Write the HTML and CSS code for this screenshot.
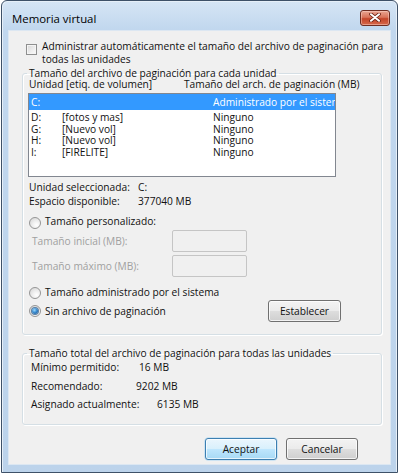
FILE: index.html
```html
<!DOCTYPE html>
<html lang="es">
<head>
<meta charset="utf-8">
<title>Memoria virtual</title>
<link rel="stylesheet" href="styles.css">
</head>
<body>
<div class="window">
  <div class="titlebar">
    <span class="title">Memoria virtual</span>
    <span class="close">
      <svg width="12" height="9" viewBox="0 0 12 9"><path d="M2 1.2 L10 7.8 M10 1.2 L2 7.8" stroke="#6b2113" stroke-width="3.6" stroke-linecap="round"/><path d="M2 1.2 L10 7.8 M10 1.2 L2 7.8" stroke="#ffffff" stroke-width="2" stroke-linecap="round"/></svg>
    </span>
  </div>
  <div class="client">
    <div class="chk-row">
      <span class="checkbox"></span>
      <span class="chk-text">Administrar automáticamente el tamaño del archivo de paginación para<br>todas las unidades</span>
    </div>

    <fieldset class="group g1">
      <legend>Tamaño del archivo de paginación para cada unidad</legend>
      <div class="cols"><span class="c-unit">Unidad [etiq. de volumen]</span><span>Tamaño del arch. de paginación (MB)</span></div>
      <div class="listbox">
        <div class="row sel"><span class="d">C:</span><span class="l"></span><span class="s">Administrado por el sistema</span></div>
        <div class="row first"><span class="d">D:</span><span class="l">[fotos y mas]</span><span class="s">Ninguno</span></div>
        <div class="row"><span class="d">G:</span><span class="l">[Nuevo vol]</span><span class="s">Ninguno</span></div>
        <div class="row"><span class="d">H:</span><span class="l">[Nuevo vol]</span><span class="s">Ninguno</span></div>
        <div class="row"><span class="d">I:</span><span class="l">[FIRELITE]</span><span class="s">Ninguno</span></div>
      </div>
      <div class="info">
        <div class="info-row"><span class="k">Unidad seleccionada:</span><span>C:</span></div>
        <div class="info-row"><span class="k">Espacio disponible:</span><span>377040 MB</span></div>
      </div>
      <div class="radio-row r1"><span class="radio"></span><span>Tamaño personalizado:</span></div>
      <div class="size-row s1"><span class="lbl">Tamaño inicial (MB):</span><span class="tbox"></span></div>
      <div class="size-row s2"><span class="lbl">Tamaño máximo (MB):</span><span class="tbox"></span></div>
      <div class="radio-row r2"><span class="radio"></span><span>Tamaño administrado por el sistema</span></div>
      <div class="radio-row r3"><span class="radio checked"></span><span>Sin archivo de paginación</span><span class="btn set">Establecer</span></div>
    </fieldset>

    <fieldset class="group g2">
      <legend>Tamaño total del archivo de paginación para todas las unidades</legend>
      <div class="tot-row"><span class="k k1">Mínimo permitido:</span><span>16 MB</span></div>
      <div class="tot-row"><span class="k k2">Recomendado:</span><span>9202 MB</span></div>
      <div class="tot-row"><span class="k k3">Asignado actualmente:</span><span>6135 MB</span></div>
    </fieldset>

    <div class="actions">
      <span class="btn default">Aceptar</span>
      <span class="btn">Cancelar</span>
    </div>
  </div>
</div>
</body>
</html>
```

FILE: styles.css
```css
html, body {
  margin: 0;
  background: #ffffff;
}
body {
  font-family: "Open Sans", "Noto Sans", sans-serif;
  font-size: 10.2px;
  color: #111;
}
.window {
  margin-left: 1px;
  width: 397px;
  height: 473px;
  box-sizing: border-box;
  border: 1px solid #3e5168;
  border-radius: 6px 6px 0 0;
  background: linear-gradient(180deg, #d6e5f5 0, #c1d7ee 28px, #bcd3eb 100%);
  padding: 0 6px 7px;
  display: flex;
  flex-direction: column;
  box-shadow: inset 1px 1px 0 #e6eff8, inset -1px 0 0 #e6eff8;
}
.titlebar {
  height: 29px;
  box-sizing: border-box;
  padding-top: 4px;
  display: flex;
  align-items: center;
  flex: none;
}
.title {
  flex: 1;
  margin-left: 4px;
  margin-top: 2px;
  font-size: 11.4px;
  line-height: 15px;
  color: #000;
}
.close {
  width: 30px;
  height: 16px;
  margin-right: 1px;
  box-sizing: border-box;
  border: 1px solid #6e2d22;
  border-radius: 3px;
  background: linear-gradient(180deg, #e9a592 0%, #d9735a 45%, #c4452a 55%, #d5684b 100%);
  box-shadow: inset 0 0 0 1px rgba(255, 220, 210, 0.45);
  display: flex;
  align-items: center;
  justify-content: center;
}
.client {
  height: 435px;
  box-sizing: border-box;
  border: 1px solid #dce7f2;
  background: #f0f0f0;
  padding-top: 8.6px;
  flex: none;
}
.chk-row {
  display: flex;
  align-items: flex-start;
  margin-left: 17px;
  line-height: 13px;
}
.checkbox {
  width: 11px;
  height: 11px;
  box-sizing: border-box;
  margin-top: 4.4px;
  margin-right: 5px;
  border: 1px solid #8e8f8f;
  background: linear-gradient(135deg, #d6d6d6 0%, #eeeeee 60%, #fbfbfb 100%);
  box-shadow: inset 0 0 0 1px #f4f4f4;
  flex: none;
}
.chk-text {
  white-space: nowrap;
}
.group {
  margin: 0;
  padding: 0;
  min-width: 0;
  border: 1px solid #d5dfe5;
  border-radius: 3px;
  box-shadow: 1px 1px 0 #ffffff, inset 1px 1px 0 #ffffff;
}
.group legend {
  padding: 0 2px;
  margin-left: 4px;
  line-height: 12px;
}
.g1 {
  margin: 1.5px 8px 0 13px;
  padding-bottom: 12px;
}
.cols {
  display: flex;
  line-height: 10px;
  padding-left: 6px;
}
.c-unit {
  width: 155px;
}
.listbox {
  margin: 4px 0 0 5px;
  width: 308px;
  height: 84px;
  box-sizing: border-box;
  border: 1px solid #828790;
  background: #fff;
  overflow: hidden;
}
.row {
  display: flex;
  line-height: 11.5px;
  padding-left: 2px;
  white-space: nowrap;
}
.row.sel {
  background: #3399ff;
  color: #fff;
  padding-top: 3.4px;
  padding-bottom: 1.1px;
}
.row.first {
  margin-top: 2px;
}
.row .d { width: 31px; flex: none; }
.row .l { width: 151px; flex: none; }
.row .s { flex: none; }
.info {
  margin-top: 3px;
  padding-left: 6px;
  line-height: 14px;
}
.info-row {
  display: flex;
}
.info-row .k {
  width: 109px;
}
.radio-row {
  display: flex;
  align-items: flex-start;
  padding-left: 6px;
  line-height: 14px;
}
.r1 { margin-top: 6px; }
.r2 { margin-top: 8px; }
.r3 {
  margin-top: 1px;
  height: 22px;
  align-items: center;
}
.radio {
  width: 12px;
  height: 12px;
  box-sizing: border-box;
  margin-top: 2.5px;
  margin-right: 4px;
  border-radius: 50%;
  border: 1px solid #959595;
  background: radial-gradient(circle at 65% 70%, #ffffff 0%, #f1f1f1 35%, #d2d2d2 100%);
  flex: none;
  display: flex;
  align-items: center;
  justify-content: center;
}
.r3 .radio {
  margin-top: 0;
}
.radio.checked::after {
  content: "";
  width: 6px;
  height: 6px;
  border-radius: 50%;
  background: radial-gradient(circle at 40% 35%, #9fdcff 0%, #3b8cd0 45%, #0f4a85 100%);
  box-shadow: 0 0 0 1px #5a7fa3;
}
.size-row {
  display: flex;
  align-items: center;
  height: 22px;
  padding-left: 9px;
  color: #a0a0a0;
  line-height: 14px;
}
.s1 { margin-top: 1px; }
.s2 { margin-top: 3px; }
.size-row .lbl {
  width: 140px;
  flex: none;
}
.tbox {
  width: 75px;
  height: 22px;
  box-sizing: border-box;
  border: 1px solid #c5c5c5;
  border-radius: 2px;
  background: #f0f0f0;
  flex: none;
}
.btn {
  width: 72px;
  height: 22px;
  box-sizing: border-box;
  border: 1px solid #707070;
  border-radius: 3px;
  background: linear-gradient(180deg, #f3f3f3 0%, #ebebeb 48%, #dddddd 52%, #cfcfcf 100%);
  box-shadow: inset 0 0 0 1px rgba(255, 255, 255, 0.75);
  display: flex;
  align-items: center;
  justify-content: center;
  line-height: 14px;
  flex: none;
}
.btn.set {
  width: 73px;
  margin-left: auto;
  margin-right: 40px;
}
.btn.default {
  border-color: #3c7fb1;
  background: linear-gradient(180deg, #eaf6fd 0%, #d9f0fc 48%, #bee6fd 52%, #a7d9f5 100%);
  box-shadow: inset 0 0 0 1px rgba(255, 255, 255, 0.7), 0 0 0 0.5px #a9d6f3;
}
.g2 {
  margin: 12px 8px 0 13px;
  padding-bottom: 10px;
}
.tot-row {
  display: flex;
  line-height: 18.5px;
  padding-left: 8px;
}
.tot-row:first-of-type {
  margin-top: -1px;
}
.k1 { width: 108px; }
.k2 { width: 105px; }
.k3 { width: 126px; }
.actions {
  display: flex;
  justify-content: flex-end;
  gap: 9px;
  margin-top: 13px;
  padding-right: 32px;
}
```
